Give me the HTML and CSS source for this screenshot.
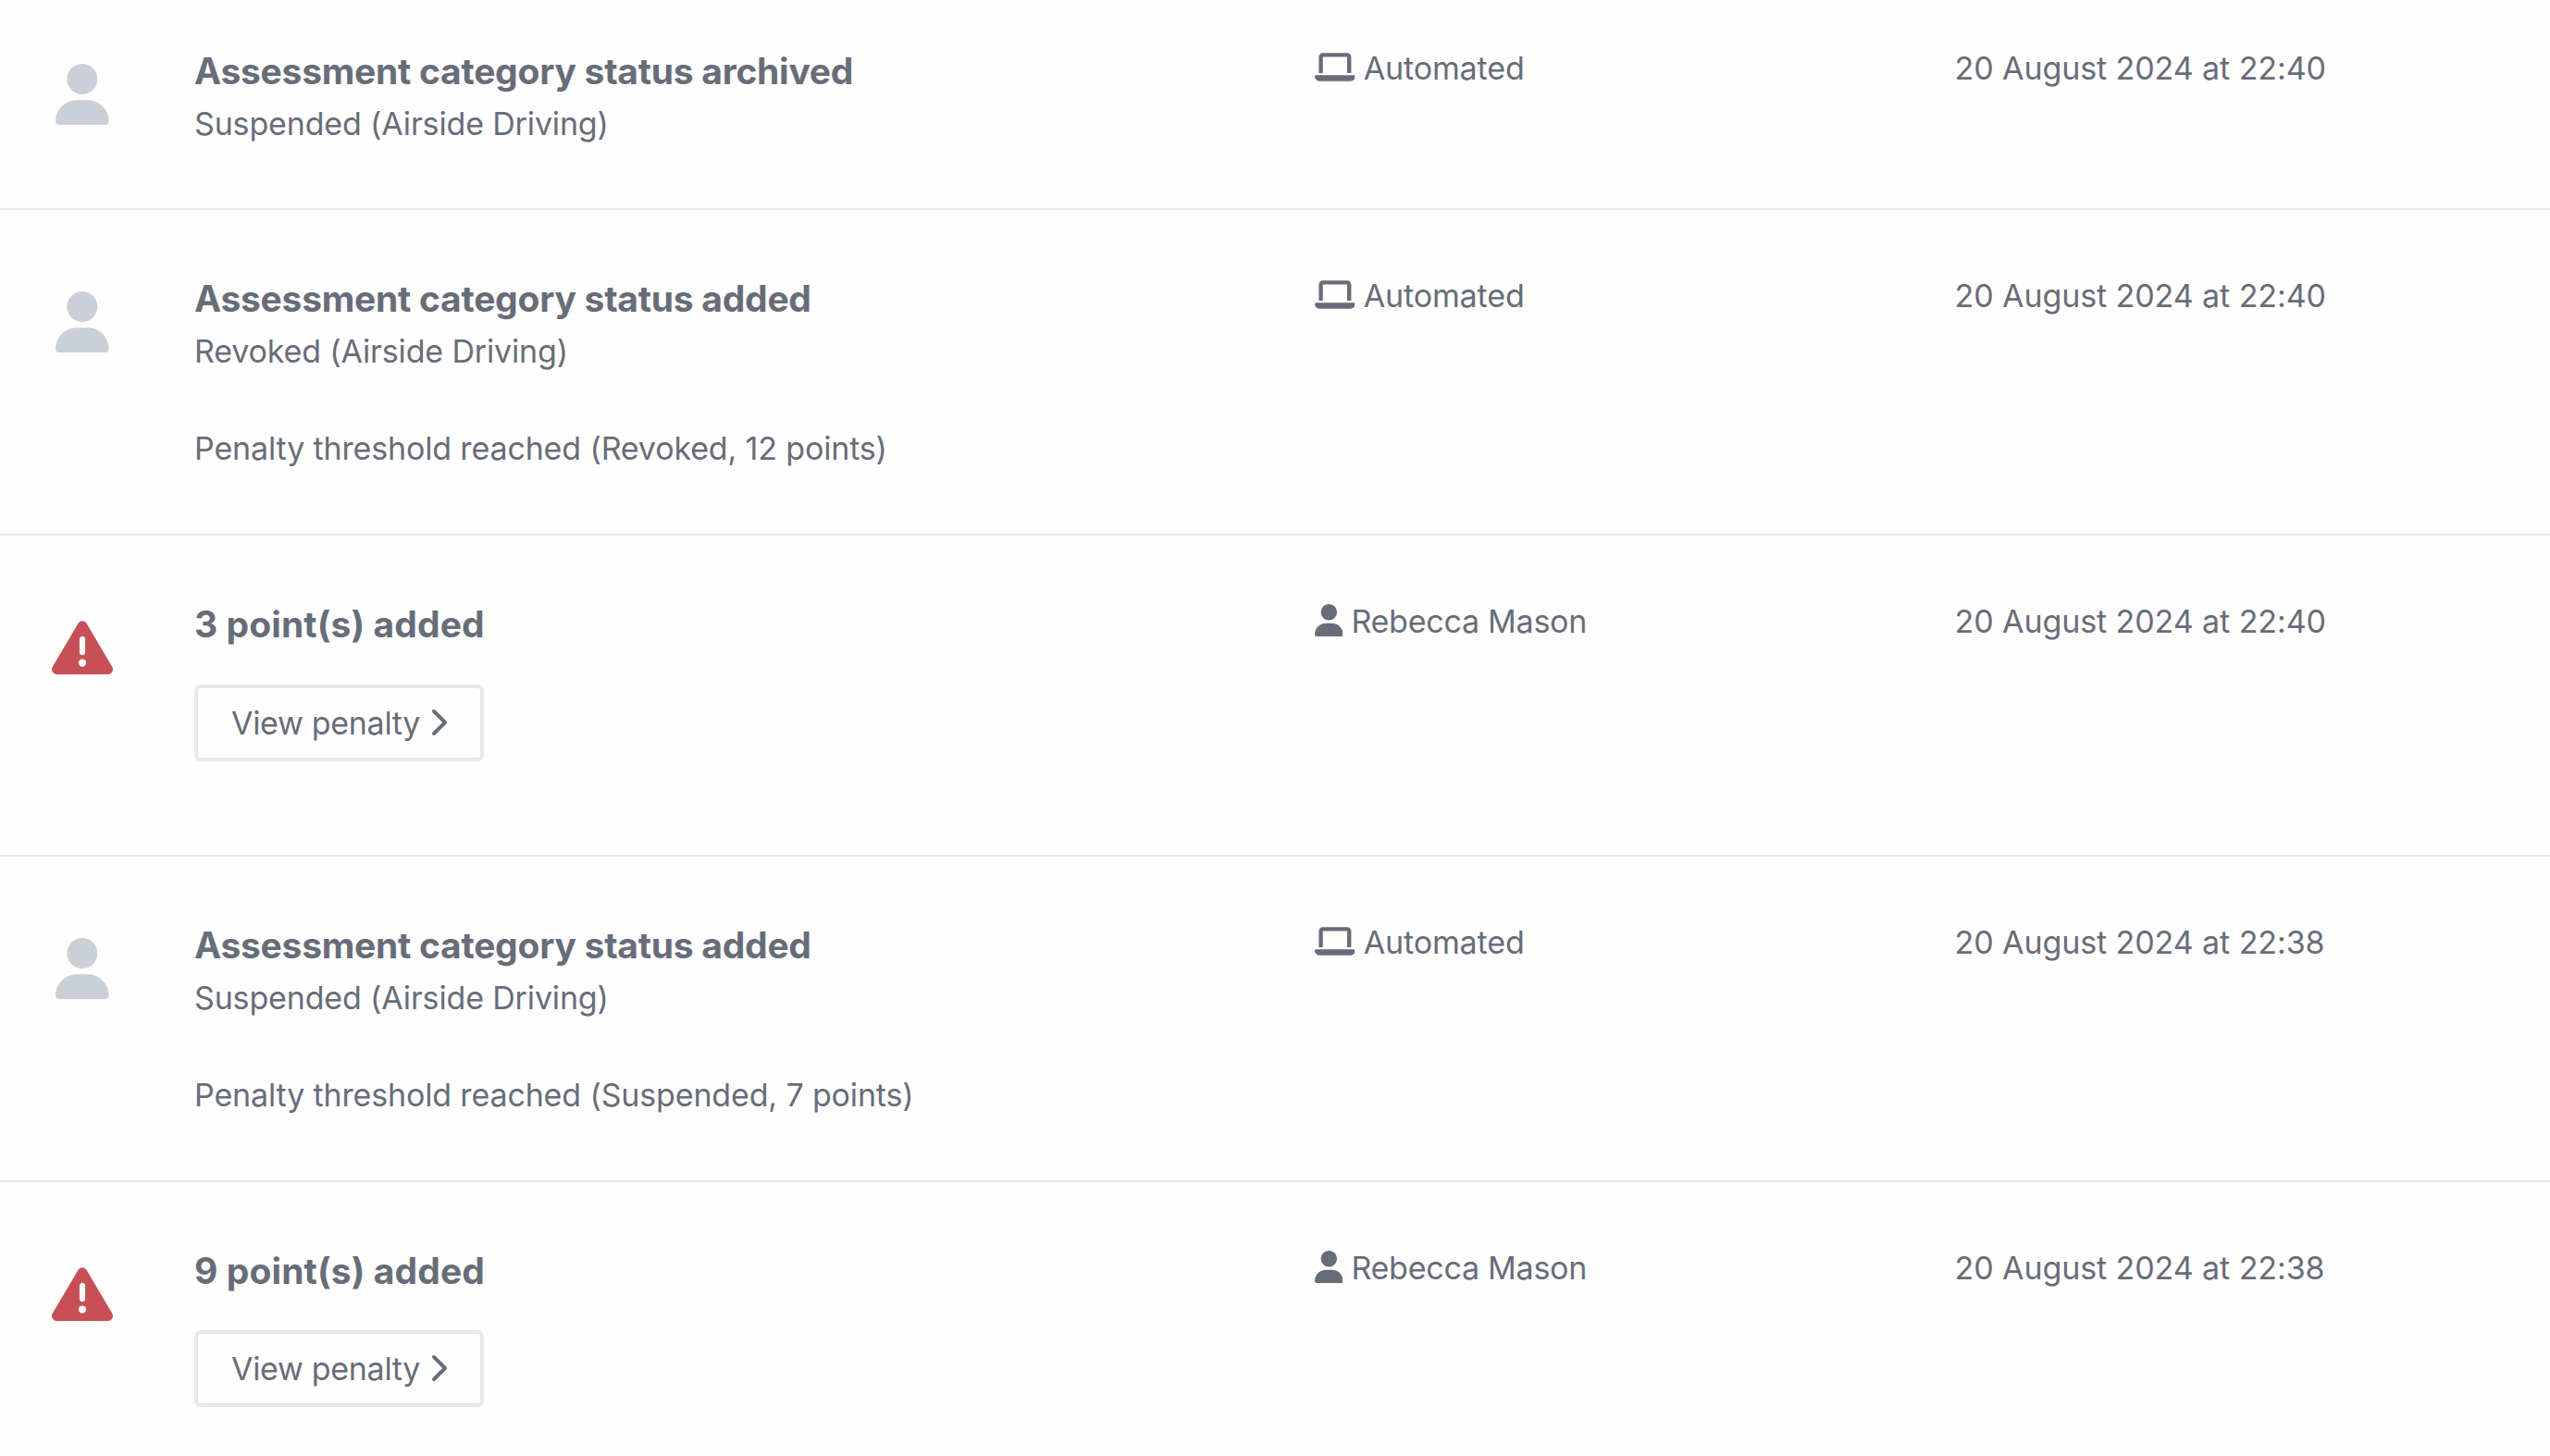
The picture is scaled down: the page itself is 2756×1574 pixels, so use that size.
FILE: index.html
```html
<!DOCTYPE html>
<html lang="en">
<head>
    <meta charset="UTF-8">
    <meta name="viewport" content="width=device-width, initial-scale=1.0">
    <title>Activity</title>
    <link rel="stylesheet" href="styles.css">
</head>
<body>
    <!-- Shared icons -->
    <svg class="sprite" aria-hidden="true">
        <symbol id="user" viewBox="0 0 448 512"><path d="M224 256A128 128 0 1 0 224 0a128 128 0 1 0 0 256zm-45.7 48C79.8 304 0 383.8 0 482.3C0 498.7 13.3 512 29.7 512H418.3c16.4 0 29.7-13.3 29.7-29.7C448 383.8 368.2 304 269.7 304H178.3z"/></symbol>
        <symbol id="laptop" viewBox="0 0 640 512"><path d="M128 32C92.7 32 64 60.7 64 96V352h64V96H512V352h64V96c0-35.3-28.7-64-64-64H128zM19.2 384C8.6 384 0 392.6 0 403.2C0 445.6 34.4 480 76.8 480H563.2c42.4 0 76.8-34.4 76.8-76.8c0-10.6-8.6-19.2-19.2-19.2H19.2z"/></symbol>
        <symbol id="warning" viewBox="0 0 512 512"><path d="M256 32c14.2 0 27.3 7.5 34.5 19.8l216 368c7.3 12.4 7.3 27.7 .2 40.1S486.3 480 472 480H40c-14.3 0-27.6-7.7-34.7-20.1s-7-27.8 .2-40.1l216-368C228.7 39.5 241.8 32 256 32zm0 128c-13.3 0-24 10.7-24 24V296c0 13.3 10.7 24 24 24s24-10.7 24-24V184c0-13.3-10.7-24-24-24zm32 224a32 32 0 1 0 -64 0 32 32 0 1 0 64 0z"/></symbol>
        <symbol id="chevron" viewBox="0 0 320 512"><path d="M310.6 233.4c12.5 12.5 12.5 32.8 0 45.3l-192 192c-12.5 12.5-32.8 12.5-45.3 0s-12.5-32.8 0-45.3L242.7 256 73.4 86.6c-12.5-12.5-12.5-32.8 0-45.3s32.8-12.5 45.3 0l192 192z"/></symbol>
    </svg>

    <div class="timeline">
        <div class="row">
            <div class="row-icon"><svg class="icon-user"><use href="#user"/></svg></div>
            <div class="details">
                <h3 class="title">Assessment category status archived</h3>
                <p class="text">Suspended (Airside Driving)</p>
            </div>
            <div class="author"><svg class="laptop"><use href="#laptop"/></svg> Automated</div>
            <div class="date">20 August 2024 at 22:40</div>
        </div>

        <div class="row">
            <div class="row-icon"><svg class="icon-user"><use href="#user"/></svg></div>
            <div class="details">
                <h3 class="title">Assessment category status added</h3>
                <p class="text">Revoked (Airside Driving)<br><br>Penalty threshold reached (Revoked, 12 points)</p>
            </div>
            <div class="author"><svg class="laptop"><use href="#laptop"/></svg> Automated</div>
            <div class="date">20 August 2024 at 22:40</div>
        </div>

        <div class="row row-penalty">
            <div class="row-icon"><svg class="icon-warning"><use href="#warning"/></svg></div>
            <div class="details">
                <h3 class="title">3 point(s) added</h3>
                <a class="button">View penalty<svg class="chevron"><use href="#chevron"/></svg></a>
            </div>
            <div class="author"><svg class="person"><use href="#user"/></svg> Rebecca Mason</div>
            <div class="date">20 August 2024 at 22:40</div>
        </div>

        <div class="row">
            <div class="row-icon"><svg class="icon-user"><use href="#user"/></svg></div>
            <div class="details">
                <h3 class="title">Assessment category status added</h3>
                <p class="text">Suspended (Airside Driving)<br><br>Penalty threshold reached (Suspended, 7 points)</p>
            </div>
            <div class="author"><svg class="laptop"><use href="#laptop"/></svg> Automated</div>
            <div class="date">20 August 2024 at 22:38</div>
        </div>

        <div class="row row-penalty">
            <div class="row-icon"><svg class="icon-warning"><use href="#warning"/></svg></div>
            <div class="details">
                <h3 class="title">9 point(s) added</h3>
                <a class="button">View penalty<svg class="chevron"><use href="#chevron"/></svg></a>
            </div>
            <div class="author"><svg class="person"><use href="#user"/></svg> Rebecca Mason</div>
            <div class="date">20 August 2024 at 22:38</div>
        </div>
    </div>
</body>
</html>
```
FILE: styles.css
```css
* {
    box-sizing: border-box;
}

body {
    margin: 0;
    height: 100vh;
    overflow: hidden;
    background-color: #fefefe;
    color: #676d78;
    font-family: Inter, "Liberation Sans", sans-serif;
    font-size: 34px;
    line-height: 52.5px;
    letter-spacing: -0.12px;
}

svg {
    fill: currentColor;
}

.sprite {
    display: none;
}

.row {
    display: grid;
    grid-template-columns: 179px 1179.5px 661px 1fr;
    column-gap: 31px;
    padding: 66px 0 66.5px;
    border-bottom: 2px solid #e8e8ed;
}

.row:first-child {
    padding-top: 47px;
    padding-bottom: 65.5px;
}

.row:last-child {
    border-bottom: none;
}

.row-penalty {
    padding-bottom: 101px;
}

.row-icon {
    display: flex;
    justify-content: center;
    align-items: flex-start;
    padding: 22px 1px 0 0;
}

.icon-user {
    width: 57.75px;
    height: 66px;
    color: #cbd0d8;
}

.icon-warning {
    width: 66px;
    height: 66px;
    color: #c84f55;
}

.title {
    margin: 0;
    font-size: 39px;
    font-weight: 700;
    line-height: 60px;
    letter-spacing: -0.26px;
}

.row-penalty .title {
    letter-spacing: 0.1px;
}

.text {
    margin: 1px 0 -1px;
    letter-spacing: -0.15px;
}

.author,
.date {
    padding-top: 1px;
}

.date {
    letter-spacing: -0.08px;
}

.button {
    display: flex;
    align-items: center;
    width: 313px;
    height: 83px;
    margin-top: 35px;
    padding: 1px 0 0 36px;
    border: 4px solid #e7e8ec;
    border-radius: 7px;
    letter-spacing: -0.3px;
}

.row-penalty:last-child .button {
    margin-top: 34px;
}

.chevron {
    width: 20px;
    height: 32px;
    margin: 0 0 3px 8.5px;
}

/* Icons next to the author name */
.laptop,
.person {
    width: 43.75px;
    height: 35px;
    vertical-align: -4.4px;
}

.person {
    width: 30.6px;
}

.row-penalty .author {
    letter-spacing: -0.25px;
}
```
